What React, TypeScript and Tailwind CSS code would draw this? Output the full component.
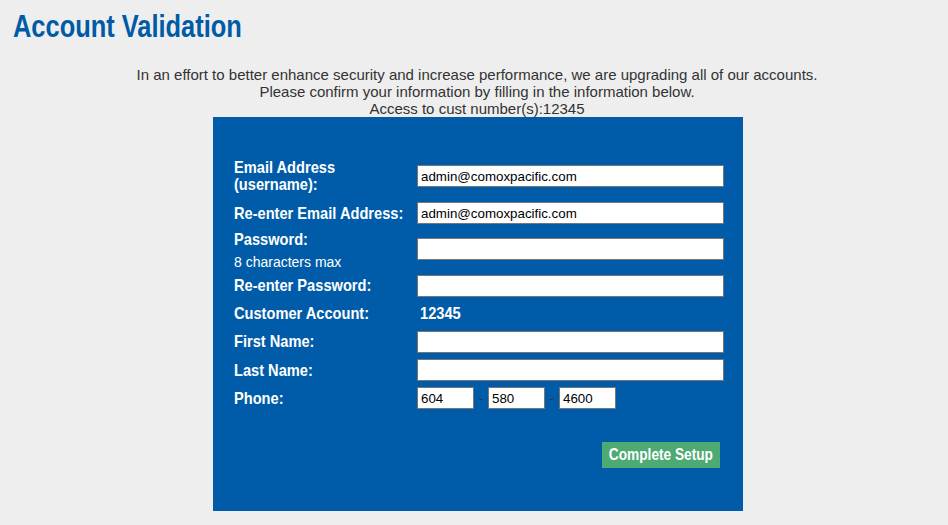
import React from "react";

// Arial Narrow is not installed, so bold Liberation Sans is squeezed horizontally
const bold = "font-['Liberation_Sans',Arial,sans-serif] font-bold whitespace-nowrap";

function Field({ value = "", className = "w-[307px]" }: { value?: string; className?: string }) {
    return (
        <input
            type="text"
            defaultValue={value}
            className={`${className} h-[22px] shrink-0 bg-white border border-[#767676] px-[3px] text-[13.33px] text-black font-['Liberation_Sans',Arial,sans-serif] outline-none`}
        />
    );
}

function Label({ children }: { children: React.ReactNode }) {
    return (
        <div className={`${bold} origin-left scale-x-[0.86] text-white text-[17px] leading-[17px]`}>
            {children}
        </div>
    );
}

function Row({ height, children, start }: { height: string; children: React.ReactNode; start?: boolean }) {
    return <div className={`flex ${start ? "items-start" : "items-center"} ${height}`}>{children}</div>;
}

function LabelCell({ children }: { children: React.ReactNode }) {
    return <div className="w-[183px] shrink-0">{children}</div>;
}

function Dash() {
    return <span className="w-[14px] text-center text-[#333333] text-[13px] leading-[13px]">-</span>;
}

export default function App() {
    return (
        <div className="min-h-[525px] bg-[#eeeeee] font-['Liberation_Sans',Arial,sans-serif] text-[#333333]">
            <div className="pl-[13px] pt-[11px]">
                <h1 className={`${bold} origin-left scale-x-[0.82] text-[#005ba6] text-[31px] leading-[31px]`}>
                    Account Validation
                </h1>
            </div>

            <div className="mt-[24px] text-center text-[15px] leading-[17px] pl-[6px]">
                <p>In an effort to better enhance security and increase performance, we are upgrading all of our accounts.</p>
                <p>Please confirm your information by filling in the information below.</p>
                <p>Access to cust number(s):12345</p>
            </div>

            <div className="ml-[213px] w-[530px] h-[394px] bg-[#005ca8] pt-[40px] pl-[21px]">
                <Row height="h-[38px]">
                    <LabelCell>
                        <Label>
                            Email Address
                            <br />
                            (username):
                        </Label>
                    </LabelCell>
                    <Field value="admin@comoxpacific.com" />
                </Row>

                <Row height="h-[36px]">
                    <LabelCell>
                        <Label>Re-enter Email Address:</Label>
                    </LabelCell>
                    <Field value="admin@comoxpacific.com" />
                </Row>

                <Row height="h-[41px]" start>
                    <LabelCell>
                        <Label>Password:</Label>
                        <div className="text-white text-[14px] leading-[16px] mt-[6px]">8 characters max</div>
                    </LabelCell>
                    <div className="mt-[5px]">
                        <Field />
                    </div>
                </Row>

                <Row height="h-[27px]">
                    <LabelCell>
                        <Label>Re-enter Password:</Label>
                    </LabelCell>
                    <Field />
                </Row>

                <Row height="h-[28px]">
                    <LabelCell>
                        <Label>Customer Account:</Label>
                    </LabelCell>
                    <div className="pl-[3px]">
                        <Label>12345</Label>
                    </div>
                </Row>

                <Row height="h-[29px]">
                    <LabelCell>
                        <Label>First Name:</Label>
                    </LabelCell>
                    <Field />
                </Row>

                <Row height="h-[28px]">
                    <LabelCell>
                        <Label>Last Name:</Label>
                    </LabelCell>
                    <Field />
                </Row>

                <Row height="h-[28px]">
                    <LabelCell>
                        <Label>Phone:</Label>
                    </LabelCell>
                    <Field value="604" className="w-[57px]" />
                    <Dash />
                    <Field value="580" className="w-[57px]" />
                    <Dash />
                    <Field value="4600" className="w-[57px]" />
                </Row>

                <div className="mt-[30px] ml-[368px]">
                    <button className="flex items-center justify-center bg-[#4daa73] w-[118px] h-[26px]">
                        <span className={`${bold} inline-block scale-x-[0.855] text-white text-[16px] leading-[16px]`}>
                            Complete Setup
                        </span>
                    </button>
                </div>
            </div>
        </div>
    );
}
